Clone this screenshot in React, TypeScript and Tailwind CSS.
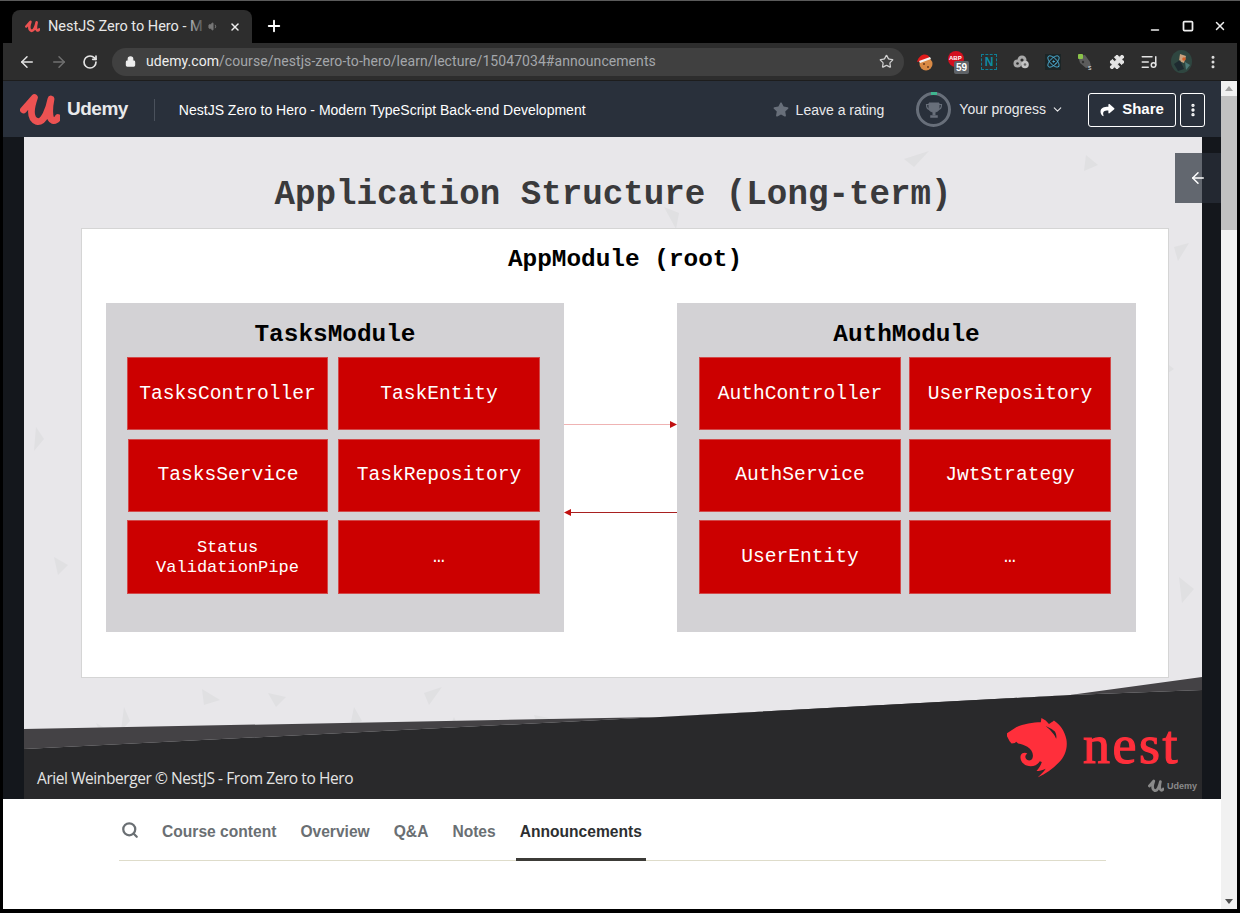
import React from 'react';
import {
  ArrowLeft, ArrowRight, RotateCw, Lock, Star, Plus, X, Minus, Square, Puzzle,
  ListMusic, MoreVertical, Volume1, ChevronDown, Search, Atom,
} from 'lucide-react';
import { FaShare, FaStar } from 'react-icons/fa';

function UdemyMark({ className }: { className?: string }) {
  return (
    <svg viewBox="0 0 40 34" className={className} fill="none" stroke="currentColor" strokeLinecap="round" strokeLinejoin="round">
      <path d="M3.5 17 L14.5 4.5 C10.5 16 10 26 17 28.5 C24 30 29 16 31 6 C29 16 29 26 33 27.5 C35 28 37 26.5 38 24.5" strokeWidth="6.8" />
    </svg>
  );
}

function NestMark({ className }: { className?: string }) {
  return (
    <svg viewBox="0 0 186 200" preserveAspectRatio="none" className={className} fill="currentColor">
      <path d="M0 50 L28 30 C50 20 80 14 103 14 L105 0 L118 8 L128 20 C132 16 140 12 143 8 C162 22 176 42 181 70 C186 100 176 128 158 146 C140 166 118 184 93 195 C104 184 112 176 118 166 C108 170 98 174 90 174 C98 164 104 154 106 144 L100 142 C92 156 76 162 60 156 C46 150 38 136 42 122 C46 114 54 112 62 116 C56 120 54 128 58 134 C64 142 76 140 78 130 C82 116 74 102 62 94 C54 90 44 86 34 84 L28 78 L24 82 L14 84 L8 76 L0 60 Z" />
      <path d="M118 26 L136 36 L146 44 C150 52 152 60 150 68 C146 56 134 40 118 26 Z" fill="#29292b" />
    </svg>
  );
}

function SlideBackdrop() {
  const shards = [
    '178,552 196,563 180,568', '100,570 106,584 97,594', '72,586 86,594 78,600', '400,556 418,550 405,568',
    '430,580 438,598 424,594', '510,578 530,582 516,596', '330,570 338,584 326,590', '1062,18 1074,28 1060,34',
    '1135,220 1150,232 1138,240', '1155,440 1170,452 1158,466', '12,290 20,302 10,314', '640,70 655,76 652,92',
    '880,22 905,14 890,30', '30,420 44,428 34,438', '1150,110 1165,106 1154,124', '244,556 262,560 252,570',
  ];
  return (
    <svg className="absolute inset-0 h-full w-full" viewBox="0 0 1178 662" preserveAspectRatio="none">
      {shards.map((points) => (
        <polygon key={points} points={points} fill="#e0e0e2" />
      ))}
      <polygon points="0,592 636,580 936,565 1046,558 1178,540 1178,553 1046,558 636,580 0,612" fill="#444245" />
      <polygon points="0,612 636,580 1046,558 1178,553 1178,662 0,662" fill="#29292b" />
    </svg>
  );
}

function Cell({ label, small, className }: { label: string; small?: boolean; className?: string }) {
  return (
    <div
      className={`flex items-center justify-center whitespace-pre-line border border-[#d24a4a] bg-[#cc0000] pt-[2px] text-center font-['Liberation_Mono',monospace] text-white ${
        small ? 'text-[17px] leading-[20px]' : 'text-[19.6px]'
      } ${className ?? ''}`}
    >
      {label}
    </div>
  );
}

function Module({ title, cells, className, gridClass }: { title: string; cells: string[]; className?: string; gridClass: string }) {
  return (
    <div className={`h-[329px] bg-[#d3d2d5] ${className ?? ''}`}>
      <div className="pt-[16px] text-center font-['Liberation_Mono',monospace] text-[24.4px] font-bold leading-[32px] text-black">
        {title}
      </div>
      <div className={`mt-[6px] grid grid-rows-[73px_73px_74px] gap-y-[8.5px] ${gridClass}`}>
        {cells.map((label) => (
          <Cell
            key={label + title}
            label={label}
            small={label.includes('\n')}
            className={label === 'TasksService' ? 'ml-[1px]' : ''}
          />
        ))}
      </div>
    </div>
  );
}

function Arrows() {
  return (
    <svg className="h-[329px] w-[113px] shrink-0" viewBox="0 0 113 329">
      <line x1="0" y1="121.5" x2="108" y2="121.5" stroke="#efb3b3" strokeWidth="1" />
      <polygon points="106,118 113,121.5 106,125" fill="#c01010" />
      <line x1="6" y1="209.5" x2="113" y2="209.5" stroke="#a82020" strokeWidth="1" />
      <polygon points="7,206 0,209.5 7,213" fill="#c01010" />
    </svg>
  );
}

function Slide() {
  return (
    <div className="relative flex h-[662px] w-[1178px] shrink-0 flex-col bg-[#e8e7ea]">
      <SlideBackdrop />
      <div className="relative pt-[37px] text-center font-['Liberation_Mono',monospace] text-[34.2px] font-bold leading-[42px] text-[#3a3a3c]">
        Application Structure (Long-term)
      </div>
      <div className="relative ml-[57px] mt-[12px] h-[450px] w-[1088px] border border-[#d5d5d5] bg-white">
        <div className="pt-[15px] text-center font-['Liberation_Mono',monospace] text-[24.4px] font-bold leading-[32px] text-black">
          AppModule (root)
        </div>
        <div className="mt-[27px] flex pl-[24px]">
          <Module
            className="w-[458px]"
            gridClass="grid-cols-[201px_202px] gap-x-[10px] pl-[21px]"
            title="TasksModule"
            cells={['TasksController', 'TaskEntity', 'TasksService', 'TaskRepository', 'Status\nValidationPipe', '…']}
          />
          <Arrows />
          <Module
            className="w-[459px]"
            gridClass="grid-cols-[202px_202px] gap-x-[8px] pl-[22px]"
            title="AuthModule"
            cells={['AuthController', 'UserRepository', 'AuthService', 'JwtStrategy', 'UserEntity', '…']}
          />
        </div>
      </div>
      <div className="relative mt-auto flex items-end justify-between pb-[11px] pl-[13px] pr-[5px]">
        <div className="font-['Open_Sans',sans-serif] text-[15.5px] leading-[20px] tracking-[-0.42px] text-[#e4e4e4]">
          Ariel Weinberger © NestJS - From Zero to Hero
        </div>
        <div className="-mb-[5px] flex flex-col items-end">
          <div className="mr-[17px] flex items-center text-[#ff2f3b]">
            <NestMark className="h-[61px] w-[61px]" />
            <span className="ml-[15px] pb-[7px] font-['Liberation_Serif',serif] text-[54px] font-normal leading-[50px] tracking-[2.5px] [-webkit-text-stroke:1.2px_#ff2f3b]">nest</span>
          </div>
          <div className="flex items-center text-[#8a8a8a]">
            <UdemyMark className="h-[14px] w-[16px]" />
            <span className="ml-[3px] font-['Liberation_Sans',sans-serif] text-[9px] font-bold leading-[14px]">Udemy</span>
          </div>
        </div>
      </div>
    </div>
  );
}

function ExtensionIcons() {
  const slot = 'flex h-[26px] w-[32px] items-center justify-center';
  return (
    <div className="ml-[5px] flex items-center">
      {/* santa cookie */}
      <div className={slot}>
        <svg viewBox="0 0 18 18" className="h-[18px] w-[18px]">
          <circle cx="10" cy="11" r="6.5" fill="#d98a45" />
          <circle cx="8" cy="11" r="1" fill="#6b3a1c" />
          <circle cx="12" cy="14" r="1" fill="#6b3a1c" />
          <path d="M1 9 C3 1 11 -1 14 5 L5 8 Z" fill="#e01b1b" />
          <path d="M3 8 L14 4 L15 6 L4 10 Z" fill="#f3f3f3" />
        </svg>
      </div>
      <div className={slot}>
        <div className="relative h-[22px] w-[22px]">
          <div className="ml-[2px] h-[16px] w-[16px] rounded-full bg-[#d40f1f]" />
          <span className="absolute left-[3px] top-[4px] font-['Liberation_Sans',sans-serif] text-[6px] font-bold leading-[7px] text-white">ABP</span>
          <span className="absolute left-[8px] top-[10px] rounded-[2px] bg-[#5f6368] px-[2px] font-['Liberation_Sans',sans-serif] text-[10px] font-bold leading-[13px] text-white">59</span>
        </div>
      </div>
      <div className={slot}>
        <div className="flex h-[16px] w-[16px] items-center justify-center border border-dashed border-[#0e7f96] font-['Liberation_Sans',sans-serif] text-[12px] font-bold leading-none text-[#0e8aa2]">
          N
        </div>
      </div>
      <div className={slot}>
        <svg viewBox="0 0 16 14" className="h-[14px] w-[16px]" fill="#a8a8a8">
          <circle cx="4.5" cy="8.5" r="4" />
          <circle cx="9" cy="5" r="4.5" />
          <circle cx="12" cy="9.5" r="3.8" fill="#c4c4c4" />
          <circle cx="9" cy="5" r="1.6" fill="#2d2d2d" />
          <circle cx="4.5" cy="8.5" r="1.3" fill="#2d2d2d" />
          <circle cx="12" cy="9.5" r="1.3" fill="#666" />
        </svg>
      </div>
      <div className={slot}>
        <div className="flex h-[16px] w-[16px] items-center justify-center bg-[#1c2526]">
          <Atom className="h-[15px] w-[15px] text-[#4fb6e0]" strokeWidth={1.6} />
        </div>
      </div>
      <div className={slot}>
        <svg viewBox="0 0 16 16" className="h-[16px] w-[16px]">
          <path d="M1 2 L8 1 L13 8 L14 13 L9 14 L3 9 Z" fill="#5c5c5c" />
          <rect x="1" y="0" width="5" height="5" rx="1" fill="#8bc34a" />
          <circle cx="6" cy="8" r="1.2" fill="#333" />
          <text x="11" y="16" fontSize="7" fill="#ddd" fontFamily="Liberation Sans">s</text>
        </svg>
      </div>
      <div className={slot}>
        <Puzzle className="h-[16px] w-[16px] fill-[#e4e4e4] text-[#e4e4e4]" strokeWidth={1.5} />
      </div>
      <div className={slot}>
        <ListMusic className="h-[18px] w-[18px] text-[#e4e4e4]" strokeWidth={2} />
      </div>
      <div className={slot}>
        <svg viewBox="0 0 21 23" className="h-[23px] w-[21px]">
          <ellipse cx="10.5" cy="11.5" rx="10.5" ry="11.5" fill="#2f4640" />
          <path d="M9 4 L15 6 L13 13 L8 11 Z" fill="#c9a27e" />
          <path d="M3 14 L9 10 L13 19 L7 21 Z" fill="#1e2a30" />
          <circle cx="13" cy="9" r="1.8" fill="#d2622a" />
          <path d="M14 12 L19 15 L15 20 Z" fill="#4d7a78" />
        </svg>
      </div>
      <div className={slot}>
        <MoreVertical className="h-[16px] w-[16px] text-[#e0e0e0]" strokeWidth={2.5} />
      </div>
    </div>
  );
}

function BrowserChrome() {
  return (
    <>
      <div className="flex h-[42px] shrink-0 items-end">
        <div className="ml-[9px] flex h-[33px] w-[240px] items-center rounded-t-[8px] bg-[#2d2d2d] pl-[13px]">
          <UdemyMark className="h-[13px] w-[15px] text-[#ec5252]" />
          <div className="relative ml-[8px] w-[160px] whitespace-nowrap font-['Roboto',sans-serif] text-[14.5px] leading-[17px] text-[#e8e8e8]">
            NestJS Zero to Hero - M
            <div className="absolute inset-y-0 right-0 w-[24px] bg-gradient-to-r from-transparent to-[#2d2d2d]" />
          </div>
          <Volume1 className="h-[11px] w-[11px] fill-[#777] text-[#777]" />
          <X className="ml-[10px] h-[12px] w-[12px] text-[#eee]" strokeWidth={3} />
        </div>
        <Plus className="mb-[8px] ml-[13px] h-[18px] w-[18px] text-white" strokeWidth={2.5} />
        <div className="ml-auto mb-[7px] flex items-center pr-[10px] text-[#eee]">
          <Minus className="mt-[9px] h-[12px] w-[12px]" strokeWidth={3} />
          <Square className="ml-[21px] h-[12px] w-[12px]" strokeWidth={3.5} />
          <X className="ml-[19px] h-[14px] w-[14px]" strokeWidth={2.5} />
        </div>
      </div>
      <div className="flex h-[38px] shrink-0 items-center border-b border-[#1d1d1d] bg-[#2d2d2d] pl-[15px]">
        <ArrowLeft className="h-[18px] w-[18px] text-[#e4e4e4]" strokeWidth={2} />
        <ArrowRight className="ml-[14px] h-[18px] w-[18px] text-[#707070]" strokeWidth={2} />
        <RotateCw className="ml-[14px] h-[16px] w-[16px] text-[#e4e4e4]" strokeWidth={2.5} />
        <div className="ml-[14px] flex h-[28px] w-[792px] shrink-0 items-center rounded-full bg-[#404040] pl-[13px] pr-[10px]">
          <Lock className="h-[11px] w-[11px] fill-[#eee] text-[#eee]" strokeWidth={2.5} />
          <span className="ml-[10px] font-['Roboto',sans-serif] text-[14px] tracking-[0.06px]">
            <span className="text-[#eeeeee]">udemy.com</span>
            <span className="text-[#a4a7ab]">/course/nestjs-zero-to-hero/learn/lecture/15047034#announcements</span>
          </span>
          <Star className="ml-auto h-[15px] w-[15px] text-[#d0d0d0]" strokeWidth={2} />
        </div>
        <ExtensionIcons />
      </div>
    </>
  );
}

function CourseHeader() {
  return (
    <div className="flex h-[56px] items-center bg-[#29303b] pl-[17px] pr-[16px] pt-[1px] font-['Liberation_Sans',sans-serif]">
      <UdemyMark className="h-[34px] w-[40px] text-[#ec5252]" />
      <span className="ml-[7px] text-[19px] font-bold tracking-[-0.5px] text-[#e8e9eb]">Udemy</span>
      <div className="ml-[26px] h-[22px] w-px bg-[#4a515c]" />
      <span className="ml-[24px] pt-[2px] text-[14px] text-white">
        NestJS Zero to Hero - Modern TypeScript Back-end Development
      </span>
      <FaStar className="ml-auto h-[15px] w-[16px] text-[#686f7a]" />
      <span className="ml-[7px] pt-[2px] text-[14px] text-[#e8e9eb]">Leave a rating</span>
      <div className="relative ml-[32px] flex h-[35px] w-[35px] items-center justify-center rounded-full border-[3px] border-[#686f7a]">
        <div className="absolute -top-[3px] left-[12px] h-[3px] w-[6px] bg-[#3fb58f]" />
        <svg viewBox="0 0 18 18" className="h-[18px] w-[18px]" fill="none" stroke="#686f7a">
          <path d="M4 2 H14 V7 C14 10 12 11 9 11 C6 11 4 10 4 7 Z" fill="#686f7a" />
          <path d="M4 3.5 H1.5 C1.5 7 3 8.5 5 8.5 M14 3.5 H16.5 C16.5 7 15 8.5 13 8.5" strokeWidth="1.2" />
          <path d="M7.8 11 H10.2 V14 H7.8 Z M5.5 14.5 H12.5 V16.5 H5.5 Z" fill="#686f7a" strokeWidth="0.5" />
        </svg>
      </div>
      <span className="ml-[8px] text-[14px] text-[#e8e9eb]">Your progress</span>
      <ChevronDown className="ml-[5px] h-[13px] w-[13px] text-[#e8e9eb]" strokeWidth={2} />
      <button className="ml-[24px] flex h-[34px] w-[88px] items-center justify-center rounded-[3px] border border-white text-[15px] font-bold text-white">
        <FaShare className="mr-[7px] h-[14px] w-[15px]" />
        Share
      </button>
      <button className="ml-[4px] flex h-[34px] w-[25px] items-center justify-center rounded-[3px] border border-white text-white">
        <MoreVertical className="h-[16px] w-[16px]" strokeWidth={3} />
      </button>
    </div>
  );
}

function CourseTabs() {
  const tabs = ['Course content', 'Overview', 'Q&A', 'Notes', 'Announcements'];
  return (
    <div className="ml-[116px] flex h-[62px] w-[987px] items-stretch gap-[16px] border-b border-[#dedcca] pl-[2px] font-['Liberation_Sans',sans-serif] text-[15.6px] font-bold">
      <div className="flex items-center pr-[3px] pt-[1px]">
        <Search className="h-[18px] w-[18px] text-[#6a6f73]" strokeWidth={3} />
      </div>
      {tabs.map((tab) => (
        <div
          key={tab}
          className={`-mb-px flex items-center border-b-[3px] px-[4px] pt-[6px] ${
            tab === 'Announcements' ? 'border-[#3c3b37] text-[#2d2f31]' : 'border-transparent text-[#6a6f73]'
          }`}
        >
          {tab}
        </div>
      ))}
    </div>
  );
}

export default function App() {
  return (
    <div className="flex h-[913px] w-[1240px] flex-col overflow-hidden bg-black">
      <div className="h-px shrink-0 bg-[#5a5a5a]" />
      <div className="flex min-h-0 flex-1 flex-col px-[3px] pb-[4px]">
        <BrowserChrome />
        <div className="flex min-h-0 flex-1">
          <div className="flex min-w-0 flex-1 flex-col bg-white">
            <CourseHeader />
            <div className="relative flex h-[662px] shrink-0 bg-[#14171c] pl-[21px]">
              <Slide />
              <button className="absolute right-0 top-[16px] flex h-[50px] w-[46px] items-center justify-center bg-[#29303b]/70 text-white">
                <ArrowLeft className="h-[18px] w-[18px]" strokeWidth={2} />
              </button>
            </div>
            <CourseTabs />
          </div>
          <div className="flex w-[16px] shrink-0 flex-col items-center bg-[#f1f1f1]">
            <div className="mt-[5px] h-0 w-0 border-x-[4px] border-b-[5px] border-x-transparent border-b-[#a3a3a3]" />
            <div className="mt-[5px] h-[134px] w-full bg-[#c1c1c1]" />
            <div className="mb-[5px] mt-auto h-0 w-0 border-x-[4px] border-t-[5px] border-x-transparent border-t-[#505050]" />
          </div>
        </div>
      </div>
    </div>
  );
}
